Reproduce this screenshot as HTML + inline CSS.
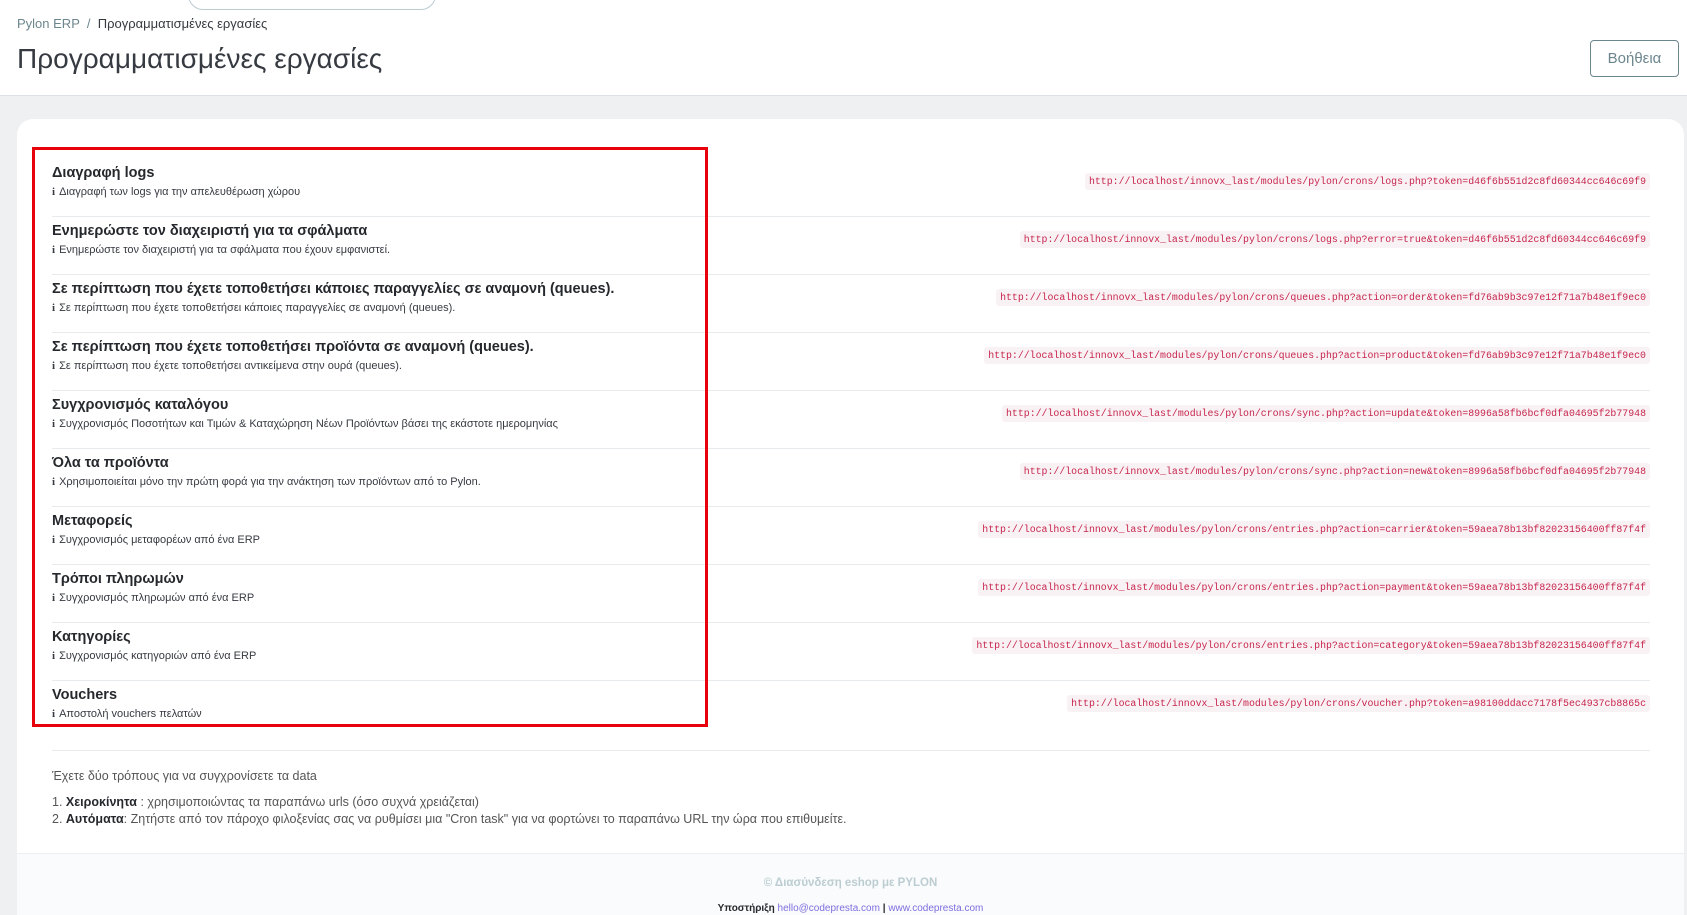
<!DOCTYPE html>
<html style="height:915px;overflow:hidden"><head><meta charset="utf-8"><style>
*{margin:0;padding:0;box-sizing:border-box}
body{width:1687px;height:915px;overflow:hidden;background:#eff0f2;font-family:"Liberation Sans",sans-serif;color:#363a41;position:relative}
.hdr{position:absolute;left:0;top:0;width:1687px;height:96px;background:#fff;border-bottom:1px solid #dcdfe3}
.search{position:absolute;left:188px;top:-20px;width:248px;height:30px;border:1px solid #bbcdd2;border-radius:15px;background:#fff}
.bc{position:absolute;left:17px;top:16px;font-size:13px;color:#6c868e}
.bc b{font-weight:normal;color:#363a41}
h1{position:absolute;left:17px;top:43px;font-size:28px;font-weight:300;color:#363a41}
.help{position:absolute;left:1590px;top:40px;width:89px;height:37px;border:1px solid #6c868e;border-radius:4px;font-size:15px;color:#6c868e;text-align:center;line-height:35px}
.card{position:absolute;left:17px;top:119px;width:1667px;height:796px;background:#fff;border-radius:16px 16px 0 0;overflow:hidden}
.red{position:absolute;left:32px;top:147px;width:676px;height:580px;border:3px solid #e8000b}
.row{position:absolute;left:52px;width:1598px;height:58px;border-bottom:1px solid #e8ebee}
.row .t{position:absolute;left:0;top:6px;font-size:14.5px;font-weight:bold;color:#25292d}
.row .d{position:absolute;left:0;top:27px;font-size:11px;color:#363a41}
.row .d i{font-style:normal;font-weight:bold;font-family:"Liberation Serif",serif;margin-right:4px}
.row code{position:absolute;right:0;top:14px;font-family:"Liberation Mono",monospace;font-size:9.9px;color:#c7254e;background:#f9f2f4;padding:3px 4px;border-radius:3px}
.sep{position:absolute;left:52px;top:750px;width:1598px;border-top:1px solid #e8ebee}
.info{position:absolute;left:52px;font-size:12.5px;color:#555}
.info b{color:#25292d}
.foot{position:absolute;left:17px;top:853px;width:1667px;height:62px;background:#fafbfc;border-top:1px solid #eceef0}
</style></head><body>
<div class="hdr">
<div class="search"></div>
<div class="bc">Pylon ERP &nbsp;/&nbsp; <b>Προγραμματισμένες εργασίες</b></div>
<h1>Προγραμματισμένες εργασίες</h1>
<div class="help">Βοήθεια</div>
</div>
<div class="card"></div>
<div class="row" style="top:159px"><div class="t">Διαγραφή logs</div><div class="d"><i>i</i>Διαγραφή των logs για την απελευθέρωση χώρου</div><code>http://localhost/innovx_last/modules/pylon/crons/logs.php?token=d46f6b551d2c8fd60344cc646c69f9</code></div>
<div class="row" style="top:217px"><div class="t">Ενημερώστε τον διαχειριστή για τα σφάλματα</div><div class="d"><i>i</i>Ενημερώστε τον διαχειριστή για τα σφάλματα που έχουν εμφανιστεί.</div><code>http://localhost/innovx_last/modules/pylon/crons/logs.php?error=true&amp;token=d46f6b551d2c8fd60344cc646c69f9</code></div>
<div class="row" style="top:275px"><div class="t">Σε περίπτωση που έχετε τοποθετήσει κάποιες παραγγελίες σε αναμονή (queues).</div><div class="d"><i>i</i>Σε περίπτωση που έχετε τοποθετήσει κάποιες παραγγελίες σε αναμονή (queues).</div><code>http://localhost/innovx_last/modules/pylon/crons/queues.php?action=order&amp;token=fd76ab9b3c97e12f71a7b48e1f9ec0</code></div>
<div class="row" style="top:333px"><div class="t">Σε περίπτωση που έχετε τοποθετήσει προϊόντα σε αναμονή (queues).</div><div class="d"><i>i</i>Σε περίπτωση που έχετε τοποθετήσει αντικείμενα στην ουρά (queues).</div><code>http://localhost/innovx_last/modules/pylon/crons/queues.php?action=product&amp;token=fd76ab9b3c97e12f71a7b48e1f9ec0</code></div>
<div class="row" style="top:391px"><div class="t">Συγχρονισμός καταλόγου</div><div class="d"><i>i</i>Συγχρονισμός Ποσοτήτων και Τιμών &amp; Καταχώρηση Νέων Προϊόντων βάσει της εκάστοτε ημερομηνίας</div><code>http://localhost/innovx_last/modules/pylon/crons/sync.php?action=update&amp;token=8996a58fb6bcf0dfa04695f2b77948</code></div>
<div class="row" style="top:449px"><div class="t">Όλα τα προϊόντα</div><div class="d"><i>i</i>Χρησιμοποιείται μόνο την πρώτη φορά για την ανάκτηση των προϊόντων από το Pylon.</div><code>http://localhost/innovx_last/modules/pylon/crons/sync.php?action=new&amp;token=8996a58fb6bcf0dfa04695f2b77948</code></div>
<div class="row" style="top:507px"><div class="t">Μεταφορείς</div><div class="d"><i>i</i>Συγχρονισμός μεταφορέων από ένα ERP</div><code>http://localhost/innovx_last/modules/pylon/crons/entries.php?action=carrier&amp;token=59aea78b13bf82023156400ff87f4f</code></div>
<div class="row" style="top:565px"><div class="t">Τρόποι πληρωμών</div><div class="d"><i>i</i>Συγχρονισμός πληρωμών από ένα ERP</div><code>http://localhost/innovx_last/modules/pylon/crons/entries.php?action=payment&amp;token=59aea78b13bf82023156400ff87f4f</code></div>
<div class="row" style="top:623px"><div class="t">Κατηγορίες</div><div class="d"><i>i</i>Συγχρονισμός κατηγοριών από ένα ERP</div><code>http://localhost/innovx_last/modules/pylon/crons/entries.php?action=category&amp;token=59aea78b13bf82023156400ff87f4f</code></div>
<div class="row" style="top:681px;border-bottom:none"><div class="t">Vouchers</div><div class="d"><i>i</i>Αποστολή vouchers πελατών</div><code>http://localhost/innovx_last/modules/pylon/crons/voucher.php?token=a98100ddacc7178f5ec4937cb8865c</code></div>
<div class="red"></div>
<div class="sep"></div>
<div class="info" style="top:769px">Έχετε δύο τρόπους για να συγχρονίσετε τα data</div>
<div class="info" style="top:795px">1. <b>Χειροκίνητα</b> : χρησιμοποιώντας τα παραπάνω urls (όσο συχνά χρειάζεται)</div>
<div class="info" style="top:812px">2. <b>Αυτόματα</b>: Ζητήστε από τον πάροχο φιλοξενίας σας να ρυθμίσει μια "Cron task" για να φορτώνει το παραπάνω URL την ώρα που επιθυμείτε.</div>
<div class="foot">
<div style="position:absolute;left:0;width:1667px;top:23px;text-align:center;font-size:11.5px;font-weight:bold;color:#bbcdd2">© Διασύνδεση eshop με PYLON</div>
<div style="position:absolute;left:0;width:1667px;top:49px;text-align:center;font-size:10px;font-weight:bold;color:#25292d">Υποστήριξη <span style="color:#7c6fe0;font-weight:normal">hello@codepresta.com</span> | <span style="color:#7c6fe0;font-weight:normal">www.codepresta.com</span></div>
</div>
</body></html>
